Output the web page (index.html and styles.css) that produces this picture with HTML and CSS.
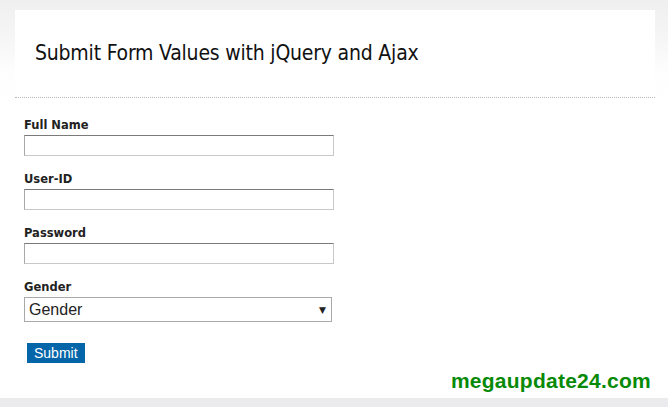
FILE: index.html
```html
<!DOCTYPE html>
<html>
<head>
<meta charset="utf-8">
<link rel="stylesheet" href="styles.css">
</head>
<body>
<div class="page">
  <div class="panel">
    <div class="header">
      <h1 class="title">Submit Form Values with jQuery and Ajax</h1>
    </div>
    <form class="form">
      <div class="field">
        <label class="label">Full Name</label>
        <input class="input" type="text">
      </div>
      <div class="field">
        <label class="label">User-ID</label>
        <input class="input" type="text">
      </div>
      <div class="field">
        <label class="label">Password</label>
        <input class="input" type="password">
      </div>
      <div class="field">
        <label class="label">Gender</label>
        <div class="select">
          <span class="select-text">Gender</span>
          <span class="arrow">▼</span>
        </div>
      </div>
      <div class="actions">
        <button class="submit" type="button">Submit</button>
      </div>
      <div class="brand">megaupdate24.com</div>
    </form>
  </div>
  <div class="footer-strip"></div>
</div>
</body>
</html>
```
FILE: styles.css
```css
html, body {
  margin: 0;
  padding: 0;
}
body {
  width: 668px;
  height: 407px;
  overflow: hidden;
  background: linear-gradient(to bottom, #efefef 0px, #f6f6f6 40px, #fdfdfd 70px, #ffffff 100px);
  font-family: "DejaVu Sans", Verdana, sans-serif;
}
.page {
  display: flex;
  flex-direction: column;
  height: 407px;
  padding-top: 10px;
  box-sizing: border-box;
}
.panel {
  margin: 0 13px 0 15px;
  flex: 1;
  display: flex;
  flex-direction: column;
}
.header {
  background: #ffffff;
  height: 88px;
  box-sizing: border-box;
  padding: 29px 0 0 20px;
  border-bottom: 1px dotted #b8b8b8;
}
.title {
  margin: 0;
  font-family: "DejaVu Sans Condensed", "DejaVu Sans", sans-serif;
  font-weight: normal;
  font-size: 21px;
  letter-spacing: -0.2px;
  color: #111;
  line-height: 28px;
}
.form {
  background: #fff;
  margin-left: -15px;
  margin-right: -13px;
  padding: 20px 0 0 24px;
  flex: 1;
  display: flex;
  flex-direction: column;
}
.field {
  display: flex;
  flex-direction: column;
  margin-bottom: 16px;
}
.label {
  font-weight: bold;
  font-size: 11.5px;
  color: #222;
  line-height: 14px;
  margin-bottom: 3px;
}
.input {
  width: 310px;
  height: 21px;
  box-sizing: border-box;
  margin: 0;
  border: 1px solid #c8c8c8;
  border-top-color: #7a7a7a;
  border-left-color: #a8a8a8;
  background: #fff;
  padding: 0;
}
.select {
  width: 308px;
  height: 25px;
  box-sizing: border-box;
  border: 1px solid #a9a9a9;
  display: flex;
  align-items: center;
  justify-content: space-between;
  padding: 0 5px 0 4px;
}
.select-text {
  font-family: "Liberation Sans", Arial, sans-serif;
  font-size: 16px;
  color: #222;
}
.arrow {
  font-size: 9px;
  color: #222;
}
.actions {
  padding-left: 3px;
  margin-top: 5px;
  display: flex;
}
.submit {
  background: #0465a9;
  color: #fff;
  border: none;
  font-family: "Liberation Sans", Arial, sans-serif;
  font-size: 14px;
  padding: 0 7px;
  height: 20px;
  line-height: 20px;
}
.brand {
  align-self: flex-end;
  margin-right: 17px;
  margin-top: 6px;
  font-family: "Liberation Sans", Arial, sans-serif;
  font-weight: bold;
  font-size: 21px;
  line-height: 24px;
  letter-spacing: 0.25px;
  color: #078a07;
}
.footer-strip {
  height: 9px;
  background: #ebeaec;
}
```
